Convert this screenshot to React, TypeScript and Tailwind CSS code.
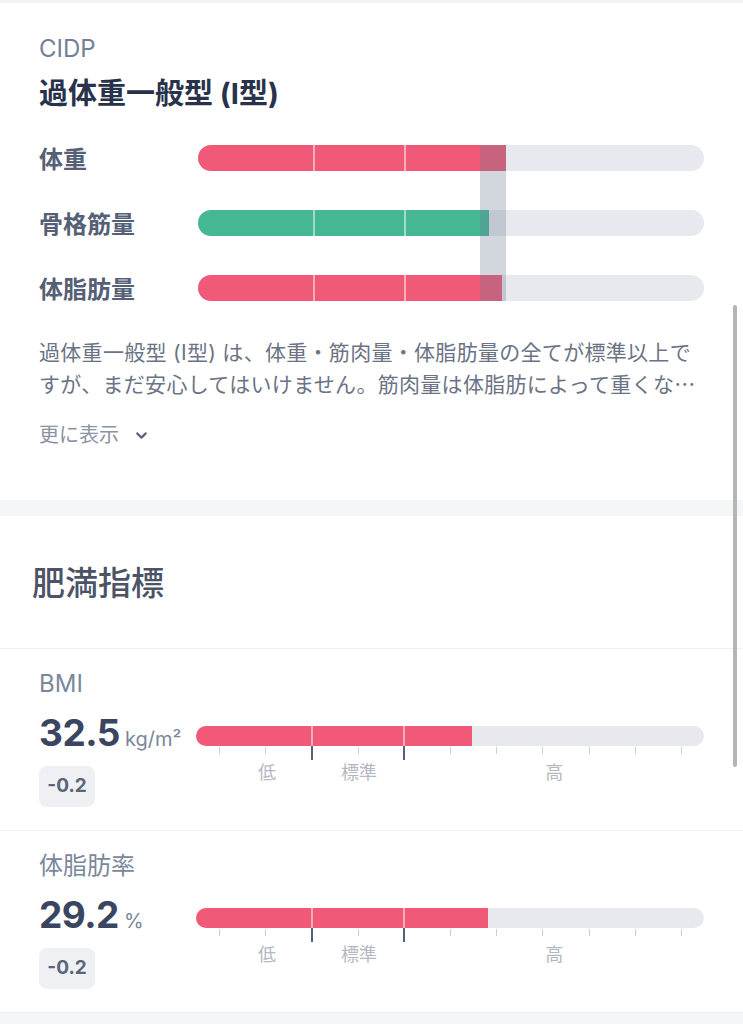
import React from 'react';
import { ChevronDown } from 'lucide-react';

interface CompositionRow {
  label: string;
  fill: number;
  color: string;
}

interface Metric {
  label: string;
  value: string;
  unit: string;
  diff: string;
  fill: number;
}

const compositions: CompositionRow[] = [
  { label: '体重', fill: 60.9, color: 'bg-[#f05a78]' },
  { label: '骨格筋量', fill: 57.5, color: 'bg-[#46b795]' },
  { label: '体脂肪量', fill: 60.1, color: 'bg-[#f05a78]' },
];

const metrics: Metric[] = [
  { label: 'BMI', value: '32.5', unit: 'kg/m²', diff: '-0.2', fill: 54.3 },
  { label: '体脂肪率', value: '29.2', unit: '%', diff: '-0.2', fill: 57.5 },
];

// range boundaries (低 | 標準 | 高)
const DIVIDERS = [22.9, 41.0];
const TICKS = Array.from({ length: 11 }, (_, i) => ((i + 0.5) / 11) * 100);

function SegmentLines() {
  return (
    <>
      {DIVIDERS.map((d) => (
        <div
          key={d}
          className="absolute top-0 bottom-0 w-[2px] -ml-px bg-white/50"
          style={{ left: `${d}%` }}
        />
      ))}
    </>
  );
}

function RangeBar({ fill }: { fill: number }) {
  return (
    <div className="relative">
      <div className="relative h-[20px] rounded-full bg-[#e8e9ee] overflow-hidden">
        <div className="h-full bg-[#f05a78]" style={{ width: `${fill}%` }} />
        <SegmentLines />
      </div>
      {/* scale ticks */}
      <div className="relative h-[16px]">
        {TICKS.map((t, i) => {
          const major = i === 2 || i === 4;
          return (
            <div
              key={t}
              className={
                major
                  ? 'absolute top-0 w-[2px] -ml-px h-[14px] bg-[#56627a]'
                  : 'absolute top-[1px] w-px h-[7px] bg-[#c9cdd5]'
              }
              style={{ left: `${major ? DIVIDERS[i === 2 ? 0 : 1] : t}%` }}
            />
          );
        })}
      </div>
      <div className="relative h-[22px] text-[18px] leading-[22px] text-[#b3b8c2]">
        <span className="absolute -translate-x-1/2 left-[14%]">低</span>
        <span className="absolute -translate-x-1/2 left-[32.1%]">標準</span>
        <span className="absolute -translate-x-1/2 left-[70.5%]">高</span>
      </div>
    </div>
  );
}

export default function App() {
  return (
    <div className="relative w-[743px] min-h-[1024px] bg-white [font-family:Inter,'Noto_Sans_CJK_JP',sans-serif]">
      <div className="h-[3px] bg-[#f2f3f5]" />

      {/* Body type */}
      <section className="px-[39px] pt-[31px] pb-[52px]">
        <p className="text-[24px] leading-[30px] text-[#738096]">CIDP</p>
        <h2 className="mt-[12px] text-[29px] leading-[36px] font-bold text-[#28324a]">
          過体重一般型 (I型)
        </h2>

        <div className="mt-[33px] flex">
          <div className="w-[159px] shrink-0 flex flex-col gap-[39px]">
            {compositions.map((c) => (
              <div
                key={c.label}
                className="h-[26px] pt-[3px] flex items-center text-[24px] font-semibold text-[#556076]"
              >
                {c.label}
              </div>
            ))}
          </div>
          <div className="relative flex-1 flex flex-col gap-[39px]">
            {compositions.map((c) => (
              <div
                key={c.label}
                className="relative h-[26px] rounded-full bg-[#e8e9ee] overflow-hidden"
              >
                <div className={`h-full ${c.color}`} style={{ width: `${c.fill}%` }} />
                <SegmentLines />
              </div>
            ))}
            {/* standard weight marker */}
            <div className="absolute top-0 bottom-0 left-[55.7%] w-[5.1%] bg-[#6b7a90]/30" />
          </div>
        </div>

        <div className="mt-[37px] text-[21px] leading-[30px] tracking-[0.3px] text-[#6b7385] whitespace-nowrap">
          <p>過体重一般型 (I型) は、体重・筋肉量・体脂肪量の全てが標準以上で</p>
          <p>
            すが、まだ安心してはいけません。筋肉量は体脂肪によって重くな
            <span className="[font-family:'Noto_Sans_CJK_JP',sans-serif]">…</span>
          </p>
        </div>

        <button className="mt-[22px] flex items-center gap-[14px] text-[20px] leading-[26px] text-[#8a93a3]">
          更に表示
          <ChevronDown size={17} strokeWidth={3} className="text-[#5b6477]" />
        </button>
      </section>

      <div className="h-[16px] bg-[#f5f6f8]" />

      {/* Obesity indices */}
      <section>
        <h2 className="px-[32px] pt-[47px] pb-[45px] text-[33px] leading-[40px] font-medium text-[#4b5466] border-b border-[#eef0f3]">
          肥満指標
        </h2>

        {metrics.map((m) => (
          <div key={m.label} className="px-[39px] pt-[21px] pb-[23px] border-b border-[#eef0f3]">
            <p className="text-[24px] leading-[28px] text-[#7b879b]">{m.label}</p>
            <div className="mt-[15px] flex">
              <div className="w-[157px] shrink-0">
                <div className="h-[40px] flex items-baseline">
                  <span className="text-[37px] leading-[40px] font-bold text-[#3a4661] tracking-[-0.5px]">
                    {m.value}
                  </span>
                  <span className="ml-[5px] text-[20px] text-[#7a869a]">{m.unit}</span>
                </div>
                <div className="mt-[13px] w-[56px] h-[41px] flex items-center justify-center rounded-[8px] bg-[#eef0f4] text-[19px] font-bold text-[#5b6579]">
                  {m.diff}
                </div>
              </div>
              <div className="flex-1 pt-[13px]">
                <RangeBar fill={m.fill} />
              </div>
            </div>
          </div>
        ))}
      </section>

      <div className="h-[12px] bg-[#f5f6f8]" />

      {/* scroll indicator */}
      <div className="absolute right-[6px] top-[305px] h-[462px] w-[4px] rounded-full bg-[#b5b5b5]" />
    </div>
  );
}
